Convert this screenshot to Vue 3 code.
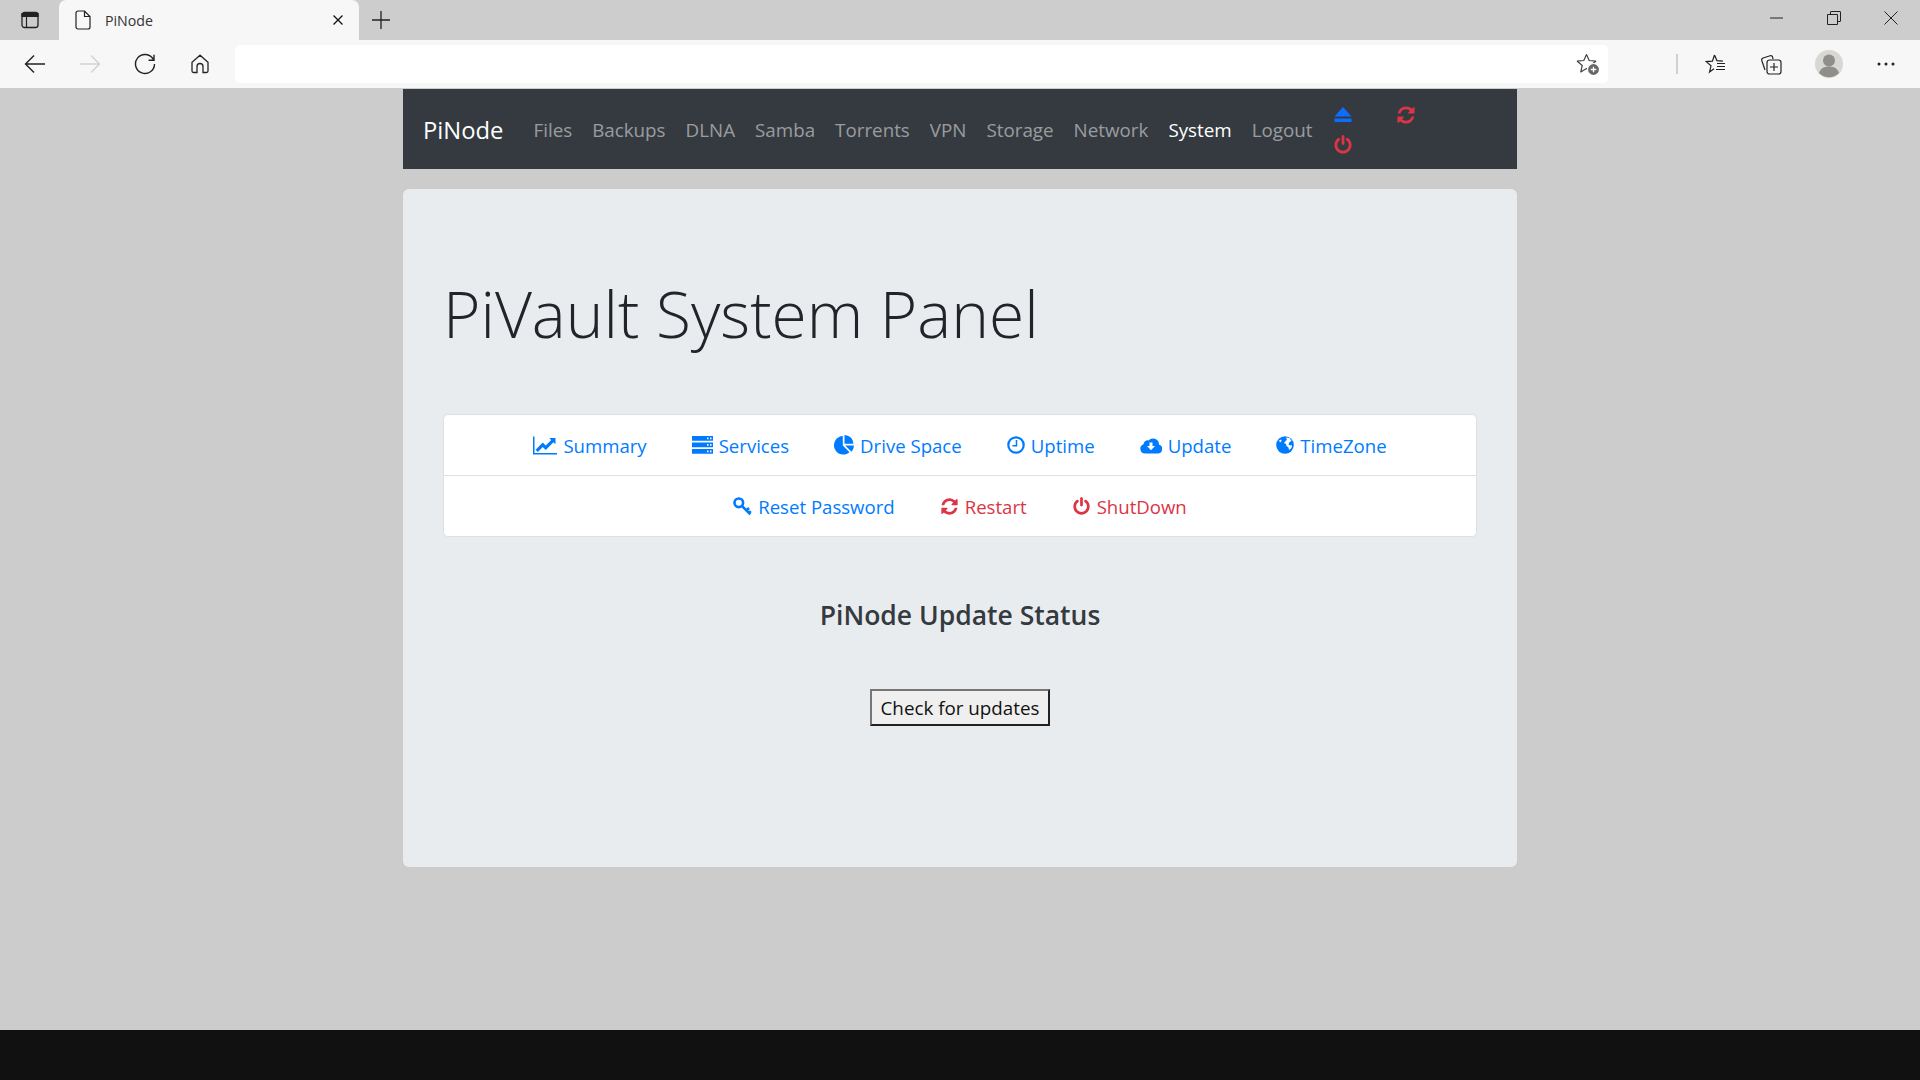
<script setup>
const navItems = ['Files','Backups','DLNA','Samba','Torrents','VPN','Storage','Network','System','Logout']
const refresh = 'M1639 1056q0 5-1 7-64 268-268 434.5t-478 166.5q-146 0-282.5-55t-243.5-157l-129 129q-19 19-45 19t-45-19-19-45v-448q0-26 19-45t45-19h448q26 0 45 19t19 45-19 45l-137 137q71 66 161 102t187 36q134 0 250-65t186-179q11-17 53-117 8-23 30-23h192q13 0 22.5 9.5t9.5 22.5zm25-800v448q0 26-19 45t-45 19h-448q-26 0-45-19t-19-45 19-45l138-138q-148-137-349-137-134 0-250 65t-186 179q-11 17-53 117-8 23-30 23h-199q-13 0-22.5-9.5t-9.5-22.5v-7q65-268 270-434.5t480-166.5q146 0 284 55.5t245 156.5l130-129q19-19 45-19t45 19 19 45z'
const power = 'M1664 896q0 156-61 298t-164 245-245 164-298 61-298-61-245-164-164-245-61-298q0-182 80.5-343t226.5-270q43-32 95.5-25t83.5 50q32 42 24.5 94.5t-49.5 84.5q-98 74-151.5 181t-53.5 228q0 104 40.5 198.5t109.5 163.5 163.5 109.5 198.5 40.5 198.5-40.5 163.5-109.5 109.5-163.5 40.5-198.5q0-121-53.5-228t-151.5-181q-42-32-49.5-84.5t24.5-94.5q31-43 84-50t95 25q146 109 226.5 270t80.5 343zm-640-768v640q0 52-38 90t-90 38-90-38-38-90v-640q0-52 38-90t90-38 90 38 38 90z'
const chart = 'M2048 1536v128h-2048v-1536h128v1408h1920zm-128-1248v435q0 21-19.5 29.5t-35.5-7.5l-121-121-633 633q-10 10-23 10t-23-10l-233-233-416 416-192-192 585-585q10-10 23-10t23 10l233 233 464-464-121-121q-16-16-7.5-35.5t29.5-19.5h435q14 0 23 9t9 23z'
</script>

<template>
  <div class="page">
    <div class="tabstrip">
      <div class="side-btn">
        <svg width="18" height="18" viewBox="0 0 18 18"><rect x="1" y="1.5" width="16" height="15" rx="2.5" fill="none" stroke="#222" stroke-width="1.3"/><path d="M1 2.5h16v3H1zM5.5 5v11" fill="#222" stroke="#222" stroke-width="1.2"/></svg>
      </div>
      <div class="tab">
        <svg class="tab-doc" width="16" height="20" viewBox="0 0 16 20"><path d="M3 1h6.5L15 6.5V17a2 2 0 0 1-2 2H3a2 2 0 0 1-2-2V3a2 2 0 0 1 2-2zM9.500 1v5.500H15" fill="none" stroke="#222" stroke-width="1.200"/></svg>
        <span class="tab-title">PiNode</span>
        <svg class="tab-x" width="12" height="12" viewBox="0 0 12 12"><path d="M1.500 1.500l9 9M10.500 1.500l-9 9" stroke="#111" stroke-width="1.300"/></svg>
      </div>
      <svg class="plus" width="18" height="18" viewBox="0 0 18 18"><path d="M9 0v18M0 9h18" stroke="#222" stroke-width="1.300"/></svg>
      <div class="winctl">
        <svg width="14" height="14" viewBox="0 0 14 14"><path d="M0 7h13" stroke="#222" stroke-width="1"/></svg>
        <svg width="14" height="14" viewBox="0 0 14 14"><path d="M.5 3.500h10v10H.5zM3.500 3.500V1a.5.5 0 0 1 .5-.5h9a.5.5 0 0 1 .5.5v9a.5.5 0 0 1-.5.5h-3" fill="none" stroke="#222" stroke-width="1"/></svg>
        <svg width="14" height="14" viewBox="0 0 14 14"><path d="M.5.500l13 13M13.500.500l-13 13" stroke="#222" stroke-width="1"/></svg>
      </div>
    </div>

    <div class="toolbar">
      <div class="tool"><svg width="22" height="20" viewBox="0 0 22 20"><path d="M21 10H2M10 1.500L1.500 10l8.500 8.500" fill="none" stroke="#222" stroke-width="1.400"/></svg></div>
      <div class="tool"><svg width="22" height="20" viewBox="0 0 22 20"><path d="M1 10h19M12 1.500l8.500 8.500-8.500 8.500" fill="none" stroke="#d2d2d2" stroke-width="1.400"/></svg></div>
      <div class="tool"><svg width="22" height="22" viewBox="0 0 22 22"><path d="M20 1.800v5.400h-5.400M19.200 6.200A9.500 9.500 0 1 0 20.500 11" fill="none" stroke="#222" stroke-width="1.400"/></svg></div>
      <div class="tool"><svg width="20" height="20" viewBox="0 0 20 20"><path d="M10 1.200L2 8.300V17a1.500 1.500 0 0 0 1.500 1.500H7v-6a3 3 0 0 1 6 0v6h3.500A1.500 1.500 0 0 0 18 17V8.300z" fill="none" stroke="#222" stroke-width="1.300"/></svg></div>
      <div class="address">
        <svg width="24" height="24" viewBox="0 0 24 24"><path d="M10.500 2.500l2.700 6 6.500.7-4.900 4.300 1.400 6.400-5.700-3.300-5.700 3.300 1.400-6.400-4.900-4.300 6.500-.7z" fill="none" stroke="#444" stroke-width="1.200" stroke-linejoin="round"/><circle cx="17.500" cy="17.500" r="6" fill="#666" stroke="#fff" stroke-width="1.200"/><path d="M17.500 14.700v5.600M14.700 17.500h5.600" stroke="#fff" stroke-width="1.300"/></svg>
      </div>
      <div class="sep"></div>
      <div class="tool r1"><svg width="22" height="22" viewBox="0 0 22 22"><path d="M9.500 2l2.400 5.600 6 .5M9 15.800L4.500 19l1.500-6.200-4.800-4.200 6.200-.5L9.500 2M12 10.500h8M12 13.500h8M11 16.500h9" fill="none" stroke="#222" stroke-width="1.200"/></svg></div>
      <div class="tool r2"><svg width="22" height="22" viewBox="0 0 22 22"><path d="M5 17L1.800 7.500a2 2 0 0 1 1.300-2.500l7-2.200a2 2 0 0 1 2.500 1.200L13 6" fill="none" stroke="#222" stroke-width="1.200"/><rect x="7" y="7" width="14" height="14" rx="2.500" fill="none" stroke="#222" stroke-width="1.200"/><path d="M14 10v8M10 14h8" stroke="#222" stroke-width="1.200"/></svg></div>
      <div class="tool r3"><svg width="28" height="28" viewBox="0 0 28 28"><circle cx="14" cy="14" r="14" fill="#d8d7d3"/><circle cx="14" cy="10.500" r="6" fill="#8f8e8b"/><path d="M4 23c1.500-4.500 5-6.500 10-6.500s8.500 2 10 6.500a14 14 0 0 1-20 0z" fill="#8f8e8b"/></svg></div>
      <div class="tool r4"><svg width="18" height="4" viewBox="0 0 18 4"><circle cx="2" cy="2" r="1.500" fill="#222"/><circle cx="9" cy="2" r="1.500" fill="#222"/><circle cx="16" cy="2" r="1.500" fill="#222"/></svg></div>
    </div>

    <div class="content">
      <div class="container">
        <nav class="navbar">
          <a class="brand">PiNode</a>
          <ul class="nav-main">
            <li v-for="n in navItems" :key="n" :class="{ active: n === 'System' }">{{ n }}</li>
          </ul>
          <div class="nav-icons">
            <svg class="i-eject" width="20" height="16" viewBox="0 0 20 16"><path d="M10 0l8.500 9.500H1.500zM1.500 11.500h17V15h-17z" fill="#0d6efd"/></svg>
            <svg class="i-nav" width="20" height="20" viewBox="0 0 1792 1792"><path :d="refresh" fill="#dc3545"/></svg>
            <svg class="i-nav" width="20" height="20" viewBox="0 0 1792 1792"><path :d="power" fill="#dc3545"/></svg>
          </div>
        </nav>

        <main class="jumbo">
          <h1>PiVault System Panel</h1>
          <div class="card">
            <div class="row">
              <a class="lnk">
                <svg width="24" height="21" viewBox="0 0 2048 1792"><path :d="chart" fill="currentColor"/></svg>Summary
              </a>
              <a class="lnk">
                <svg width="21" height="18" viewBox="0 0 21 18"><path fill-rule="evenodd" d="M0 0h21v4.800H0zM0 6.500h21v4.800H0zM0 13h21v4.800H0zM15 1.600v1.600h1.500V1.600zM18 1.600v1.600h1.500V1.600zM15 8.100v1.600h1.500V8.100zM18 8.100v1.600h1.500V8.100zM15 14.600v1.600h1.500v-1.600zM18 14.600v1.600h1.500v-1.600z" fill="currentColor"/></svg>Services
              </a>
              <a class="lnk">
                <svg width="20" height="20" viewBox="0 0 20 20"><path d="M8.800 1v9.500l6.700 6.700A9.300 9.300 0 1 1 8.800 1zM10.500 0a9 9 0 0 1 9 8.800h-9zM11.200 10.500h8.800a9 9 0 0 1-2.600 6.200z" fill="currentColor"/></svg>Drive Space
              </a>
              <a class="lnk">
                <svg width="18" height="18" viewBox="0 0 18 18"><circle cx="9" cy="9" r="7.700" fill="none" stroke="currentColor" stroke-width="2.200"/><path d="M9.500 4v5.700H5.500" fill="none" stroke="currentColor" stroke-width="1.500"/></svg>Uptime
              </a>
              <a class="lnk">
                <svg width="22" height="17" viewBox="0 0 22 17"><path d="M5 16.500a4.800 4.800 0 0 1-1.500-9.300A4 4 0 0 1 8.500 3.500 6 6 0 0 1 19 7.500a4.600 4.600 0 0 1-1.500 9z" fill="currentColor"/><path d="M9.500 5.500h3V9H15l-4 4.200L7 9h2.500z" fill="#fff"/></svg>Update
              </a>
              <a class="lnk">
                <svg width="18" height="18" viewBox="0 0 18 18"><circle cx="9" cy="9" r="8.800" fill="currentColor"/><path d="M10 1.500l3.500.5 2 3-2 1-1 2.500 2 1 1.500-.5-.5 3-2.500 2-.5-2.500-2-1.500-.5-2-2-1 2-2.500 1-.5zM3 4.500l2-1 .5 1.500-1.500 1.500z" fill="#fff"/></svg>TimeZone
              </a>
            </div>
            <div class="row">
              <a class="lnk">
                <svg width="19" height="19" viewBox="0 0 19 19"><circle cx="5.800" cy="5.800" r="4.300" fill="none" stroke="currentColor" stroke-width="2.600"/><path d="M9 9l8.300 8.300M13.500 13.500l2.500-2.500M16 16l1.800-1.800" fill="none" stroke="currentColor" stroke-width="2.500"/></svg>Reset Password
              </a>
              <a class="lnk red">
                <svg width="19" height="19" viewBox="0 0 1792 1792"><path :d="refresh" fill="currentColor"/></svg>Restart
              </a>
              <a class="lnk red">
                <svg width="19" height="19" viewBox="0 0 1792 1792"><path :d="power" fill="currentColor"/></svg>ShutDown
              </a>
            </div>
          </div>
          <h4>PiNode Update Status</h4>
          <div class="btn-wrap"><button type="button">Check for updates</button></div>
        </main>
      </div>
    </div>
    <div class="foot"></div>
  </div>
</template>

<style>
html, body { margin: 0; padding: 0; overflow: hidden; }
</style>

<style scoped>
.page { width: 1920px; height: 1080px; display: flex; flex-direction: column; overflow: hidden; font-family: "Open Sans", "Noto Sans", sans-serif; color: #212529; }
.tabstrip { height: 40px; background: #cdcdcd; display: flex; align-items: center; flex: none; }
.side-btn { width: 59px; display: flex; justify-content: center; }
.tab { width: 300px; height: 40px; background: #f7f7f7; border-radius: 7px 7px 0 0; display: flex; align-items: center; padding: 0 15px 0 16px; box-sizing: border-box; }
.tab-doc { margin-right: 14px; }
.tab-title { flex: 1; font-size: 14.200px; color: #333; }
.plus { margin-left: 13px; }
.winctl { margin-left: auto; display: flex; gap: 43px; padding-right: 22px; align-items: center; margin-top: -4px; }
.toolbar { height: 48px; background: #f7f7f7; display: flex; align-items: center; flex: none; padding-left: 7px; box-sizing: border-box; }
.tool { width: 55px; height: 48px; display: flex; align-items: center; justify-content: center; flex: none; }
.address { width: 1373px; margin-left: 8px; height: 38px; background: #fff; border-radius: 5px; display: flex; align-items: center; justify-content: flex-end; padding-right: 8px; box-sizing: border-box; flex: none; }
.sep { width: 2px; height: 20px; background: #d0d0d0; margin-left: 68px; flex: none; }
.r1 { margin-left: 10px; }
.r3 { margin-left: 3px; }
.r4 { margin-left: 2px; }
.content { flex: 1; background: #cccccc; display: flex; justify-content: center; padding-top: 1px; }
.container { width: 1114px; }
.navbar { height: 80px; background: #343a40; display: flex; align-items: center; padding: 0 20px; box-sizing: border-box; }
.brand { font-size: 23.800px; color: #fff; margin-right: 20px; margin-top: 1px; }
.nav-main { list-style: none; display: flex; margin: 1px 0 0; padding: 0; font-size: 18.800px; color: rgba(255,255,255,.5); }
.nav-main li { padding: 0 10px; line-height: 30px; white-space: nowrap; }
.nav-main .active { color: #fff; }
.nav-icons { display: grid; grid-template-columns: 63px 40px; grid-auto-rows: 30px; margin-left: 10px; margin-top: 1px; align-items: center; justify-items: start; }
.jumbo { height: 678px; margin-top: 20px; background: #e9ecef; border-radius: 6px; padding: 83px 40px 0; box-sizing: border-box; }
h1 { font-size: 64px; font-weight: 300; line-height: 84px; margin: 0 0 58px; color: #212529; white-space: nowrap; }
.card { background: #fff; border: 1px solid #dfdfdf; border-radius: 5px; }
.row { height: 60px; display: flex; justify-content: center; align-items: center; gap: 45px; }
.row + .row { border-top: 1px solid #dfdfdf; }
.lnk { display: flex; align-items: center; gap: 6px; font-size: 18.600px; color: #007bff; white-space: nowrap; }
.lnk.red { color: #dc3545; }
h4 { margin: 60px 0 0; font-size: 26.500px; font-weight: 600; line-height: 36px; text-align: center; color: #343a40; }
.btn-wrap { display: flex; justify-content: center; margin-top: 56px; }
button { width: 180px; height: 37px; box-sizing: border-box; border: 2px solid; border-color: #767676 #222 #222 #767676; background: #efefef; font-family: inherit; font-size: 18.800px; color: #111; padding: 0; border-radius: 0; }
.foot { height: 50px; background: #111; flex: none; }
</style>
